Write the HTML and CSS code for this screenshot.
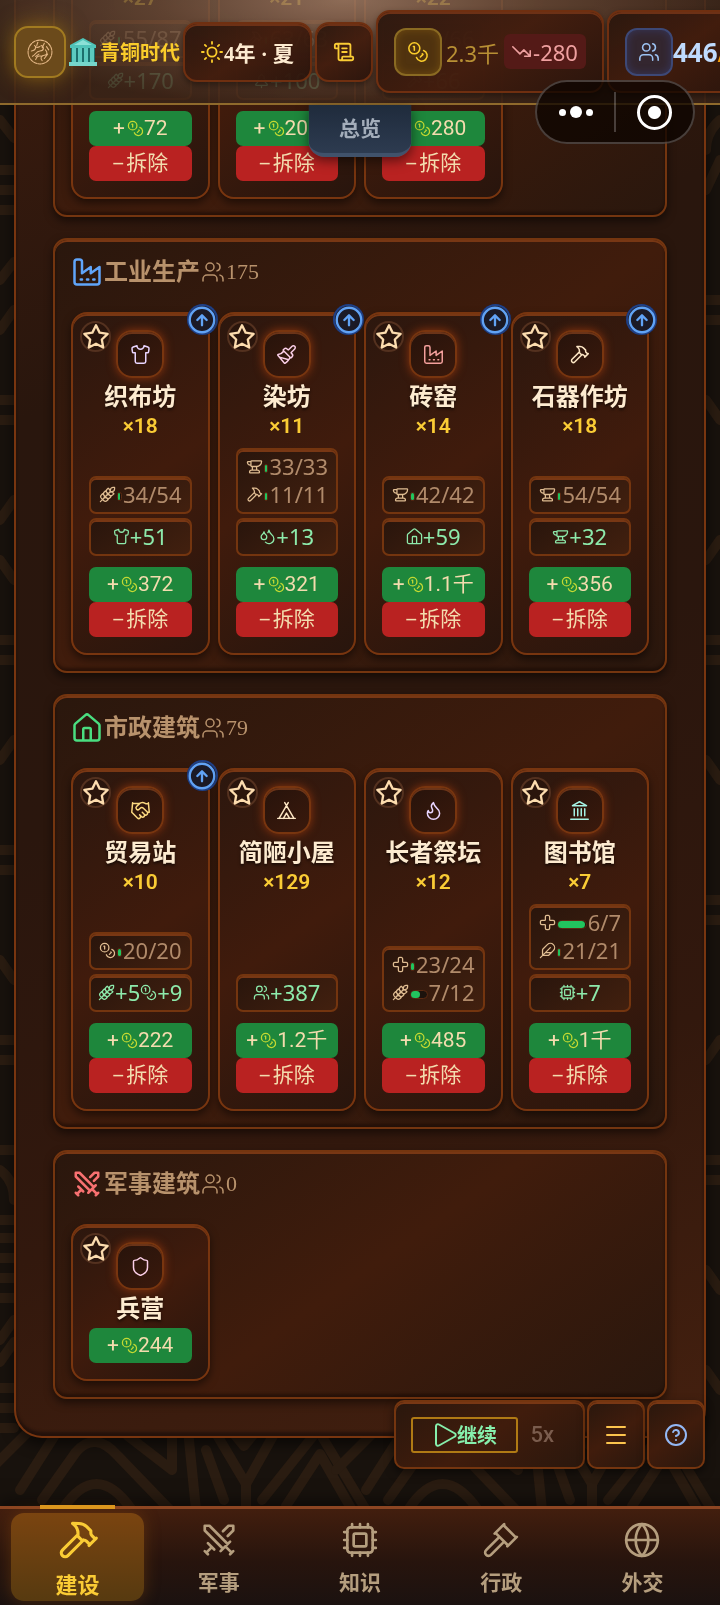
FILE: index.html
```
<!DOCTYPE html>
<html lang="zh-CN">
<head>
    <meta charset="UTF-8">
    <meta name="viewport" content="width=device-width, initial-scale=1.0">
    <title>建设</title>
    <link rel="stylesheet" href="styles.css">
</head>
<body>
    <!-- icon sprite -->
    <svg class="sprite" aria-hidden="true">
        <symbol id="star" viewBox="0 0 24 24"><path d="M12 2l3.09 6.26L22 9.27l-5 4.87 1.18 6.88L12 17.77l-6.18 3.25L7 14.14 2 9.27l6.91-1.01z"/></symbol>
        <symbol id="up" viewBox="0 0 24 24"><circle cx="12" cy="12" r="10.500"/><path d="M12 16.500V8M8 12l4-4 4 4"/></symbol>
        <symbol id="factory" viewBox="0 0 24 24"><path d="M2 20a2 2 0 0 0 2 2h16a2 2 0 0 0 2-2V8l-7 5V8l-7 5V4a2 2 0 0 0-2-2H4a2 2 0 0 0-2 2ZM17 18h1M12 18h1M7 18h1"/></symbol>
        <symbol id="users" viewBox="0 0 24 24"><circle cx="9" cy="7" r="4"/><path d="M16 21v-2a4 4 0 0 0-4-4H6a4 4 0 0 0-4 4v2M22 21v-2a4 4 0 0 0-3-3.870M16 3.130a4 4 0 0 1 0 7.750"/></symbol>
        <symbol id="coins" viewBox="0 0 24 24"><circle cx="8" cy="8" r="6"/><path d="M18.090 10.370A6 6 0 1 1 10.340 18M7 6h1v4M16.710 13.880l.7.710-2.820 2.820"/></symbol>
        <symbol id="shirt" viewBox="0 0 24 24"><path d="M20.380 3.460 16 2a4 4 0 0 1-8 0L3.620 3.460a2 2 0 0 0-1.340 2.230l.58 3.470a1 1 0 0 0 .99.84H6v10c0 1.100.9 2 2 2h8a2 2 0 0 0 2-2V10h2.150a1 1 0 0 0 .99-.84l.58-3.470a2 2 0 0 0-1.340-2.230z"/></symbol>
        <symbol id="brush" viewBox="0 0 24 24"><path d="m14.622 17.897-10.680-2.913M18.376 2.622a1 1 0 1 1 3.002 3.002L17.360 9.643a.5.5 0 0 0 0 .707l.944.944a2.410 2.410 0 0 1 0 3.408l-.944.944a.5.5 0 0 1-.707 0L8.354 7.348a.5.5 0 0 1 0-.707l.944-.944a2.410 2.410 0 0 1 3.408 0l.944.944a.5.5 0 0 0 .707 0zM9 8c-1.804 2.710-3.970 3.460-6.583 3.948a.507.507 0 0 0-.302.819l7.320 8.883a1 1 0 0 0 1.185.204C12.735 20.405 16 16.792 16 15"/></symbol>
        <symbol id="hammer" viewBox="0 0 24 24"><path d="m15 12-8.500 8.500a2.120 2.120 0 0 1-3-3L12 9M18 15l4-4M21.500 11.500l-1.914-1.914A2 2 0 0 1 19 8.172V7l-2.260-2.260a6 6 0 0 0-4.202-1.756L9 2.960l.92.82A6.180 6.180 0 0 1 12 8.400V10l2 2h1.172a2 2 0 0 1 1.414.586L18.500 14.500"/></symbol>
        <symbol id="anvil" viewBox="0 0 24 24"><path d="M7 10H6a4 4 0 0 1-4-4 1 1 0 0 1 1-1h4M7 5a1 1 0 0 1 1-1h13a1 1 0 0 1 1 1 7 7 0 0 1-7 7H8a1 1 0 0 1-1-1zM9 12v5M15 12v5M5 20a3 3 0 0 1 3-3h8a3 3 0 0 1 3 3 1 1 0 0 1-1 1H6a1 1 0 0 1-1-1"/></symbol>
        <symbol id="wheat" viewBox="0 0 24 24"><path d="M2 22 16 8M3.470 12.530 5 11l1.530 1.530a3.500 3.500 0 0 1 0 4.940L5 19l-1.530-1.530a3.500 3.500 0 0 1 0-4.940ZM7.470 8.530 9 7l1.530 1.530a3.500 3.500 0 0 1 0 4.940L9 15l-1.530-1.530a3.500 3.500 0 0 1 0-4.940ZM11.470 4.530 13 3l1.530 1.530a3.500 3.500 0 0 1 0 4.940L13 11l-1.530-1.530a3.500 3.500 0 0 1 0-4.940ZM20 2h2v2a4 4 0 0 1-4 4h-2V6a4 4 0 0 1 4-4ZM11.470 17.470 13 19l-1.530 1.530a3.500 3.500 0 0 1-4.940 0L5 19l1.530-1.530a3.500 3.500 0 0 1 4.940 0ZM15.470 13.470 17 15l-1.530 1.530a3.500 3.500 0 0 1-4.940 0L9 15l1.530-1.530a3.500 3.500 0 0 1 4.940 0ZM19.470 9.470 21 11l-1.530 1.530a3.500 3.500 0 0 1-4.940 0L13 11l1.530-1.530a3.500 3.500 0 0 1 4.940 0Z"/></symbol>
        <symbol id="drops" viewBox="0 0 24 24"><path d="M7 16.300c2.200 0 4-1.830 4-4.050 0-1.160-.57-2.260-1.710-3.190S7.290 6.750 7 5.300c-.29 1.450-1.140 2.840-2.290 3.760S3 11.100 3 12.250c0 2.220 1.800 4.050 4 4.050zM12.560 6.600A10.970 10.970 0 0 0 14 3.020c.5 2.500 2 4.900 4 6.500s3 3.500 3 5.500a6.980 6.980 0 0 1-11.910 4.970"/></symbol>
        <symbol id="house" viewBox="0 0 24 24"><path d="M15 21v-8a1 1 0 0 0-1-1h-4a1 1 0 0 0-1 1v8M2 10a2 2 0 0 1 .709-1.528l8-6.800a2 2 0 0 1 2.582 0l8 6.800A2 2 0 0 1 22 10v10a2 2 0 0 1-2 2H4a2 2 0 0 1-2-2z"/></symbol>
        <symbol id="shake" viewBox="0 0 24 24"><path d="m11 17 2 2a1 1 0 1 0 3-3M14 14l2.500 2.500a1 1 0 1 0 3-3l-3.880-3.880a3 3 0 0 0-4.240 0l-.88.88a1 1 0 1 1-3-3l2.810-2.810a5.790 5.790 0 0 1 7.060-.87l.47.28a2 2 0 0 0 1.420.25L21 4M21 3l1 11h-2M3 3 2 14l6.500 6.500a1 1 0 1 0 3-3M3 4h8"/></symbol>
        <symbol id="tent" viewBox="0 0 24 24"><path d="M3.500 21 14 3M20.500 21 10 3M15.500 21 12 15l-3.500 6M2 21h20"/></symbol>
        <symbol id="flame" viewBox="0 0 24 24"><path d="M8.500 14.500A2.500 2.500 0 0 0 11 12c0-1.380-.5-2-1-3-1.072-2.143-.224-4.054 2-6 .5 2.500 2 4.900 4 6.500 2 1.600 3 3.500 3 5.500a7 7 0 1 1-14 0c0-1.153.433-2.294 1-3a2.500 2.500 0 0 0 2.500 2.500z"/></symbol>
        <symbol id="landmark" viewBox="0 0 24 24"><path d="M10 18v-8M14 18v-8M18 18v-8M6 18v-8M2 22h20M12 2l8 4.500H4z"/></symbol>
        <symbol id="cross" viewBox="0 0 24 24"><path d="M4 9a2 2 0 0 0-2 2v2a2 2 0 0 0 2 2h4a1 1 0 0 1 1 1v4a2 2 0 0 0 2 2h2a2 2 0 0 0 2-2v-4a1 1 0 0 1 1-1h4a2 2 0 0 0 2-2v-2a2 2 0 0 0-2-2h-4a1 1 0 0 1-1-1V4a2 2 0 0 0-2-2h-2a2 2 0 0 0-2 2v4a1 1 0 0 1-1 1z"/></symbol>
        <symbol id="feather" viewBox="0 0 24 24"><path d="M12.670 19a2 2 0 0 0 1.416-.588l6.154-6.172a6 6 0 0 0-8.490-8.490L5.586 9.914A2 2 0 0 0 5 11.328V18a1 1 0 0 0 1 1zM16 8 2 22M17.500 15H9"/></symbol>
        <symbol id="cpu" viewBox="0 0 24 24"><rect x="4" y="4" width="16" height="16" rx="2"/><rect x="8" y="8" width="8" height="8" rx="1"/><path d="M12 20v2M12 2v2M17 20v2M17 2v2M2 12h2M2 17h2M2 7h2M20 12h2M20 17h2M20 7h2M7 20v2M7 2v2"/></symbol>
        <symbol id="swords" viewBox="0 0 24 24"><path d="M14.500 17.500 3 6V3h3l11.500 11.500M13 19l6-6M16 16l4 4M19 21l2-2M14.500 6.500 18 3h3v3l-3.500 3.500M5 14l4 4M7 17l-3 3M3 19l2 2"/></symbol>
        <symbol id="shield" viewBox="0 0 24 24"><path d="M20 13c0 5-3.500 7.500-7.660 8.950a1 1 0 0 1-.67-.01C7.500 20.500 4 18 4 13V6a1 1 0 0 1 1-1c2 0 4.500-1.200 6.240-2.720a1.170 1.170 0 0 1 1.520 0C14.510 3.810 17 5 19 5a1 1 0 0 1 1 1z"/></symbol>
        <symbol id="gavel" viewBox="0 0 24 24"><path d="m14 13-8.381 8.380a1 1 0 0 1-3.001-3L11 10M16 16l6-6M21.500 10.500l-8-8M8 8l6-6M8.500 7.500l8 8"/></symbol>
        <symbol id="globe" viewBox="0 0 24 24"><circle cx="12" cy="12" r="10"/><path d="M12 2a14.500 14.500 0 0 0 0 20 14.500 14.500 0 0 0 0-20M2 12h20"/></symbol>
        <symbol id="sun" viewBox="0 0 24 24"><circle cx="12" cy="12" r="5"/><path d="M12 1v2M12 21v2M4.200 4.200l1.400 1.400M18.400 18.400l1.400 1.400M1 12h2M21 12h2M5.600 18.400l-1.400 1.400M19.800 4.200l-1.400 1.400"/></symbol>
        <symbol id="scroll" viewBox="0 0 24 24"><path d="M15 12h-5M15 8h-5M19 17V5a2 2 0 0 0-2-2H4M8 21h12a2 2 0 0 0 2-2v-1a1 1 0 0 0-1-1H11a1 1 0 0 0-1 1v1a2 2 0 1 1-4 0V5a2 2 0 1 0-4 0v2a1 1 0 0 0 1 1h3"/></symbol>
        <symbol id="down" viewBox="0 0 24 24"><path d="M16 18h7v-7M23 18l-8-8-5 5L1 6"/></symbol>
        <symbol id="play" viewBox="0 0 24 24"><path d="M3 3a2 2 0 0 1 3-1.500l16 9a2 2 0 0 1 0 3l-16 9A2 2 0 0 1 3 21z"/></symbol>
        <symbol id="menu" viewBox="0 0 24 24"><path d="M3 4h18M3 12h18M3 20h18"/></symbol>
        <symbol id="help" viewBox="0 0 24 24"><circle cx="12" cy="12" r="10"/><path d="M9.090 9a3 3 0 0 1 5.830 1c0 2-3 3-3 3M12 17h.01"/></symbol>
        <symbol id="tree" viewBox="0 0 24 24"><path d="m17 14 3 3.300a1 1 0 0 1-.7 1.700H4.700a1 1 0 0 1-.7-1.700L7 14h-.3a1 1 0 0 1-.7-1.700L9 9h-.2A1 1 0 0 1 8 7.300L12 3l4 4.300a1 1 0 0 1-.8 1.700H15l3 3.300a1 1 0 0 1-.7 1.700ZM12 22v-3"/></symbol>
    </svg>

    <!-- backdrop ornament -->
    <svg class="backdrop" viewBox="0 0 720 1605" preserveAspectRatio="xMidYMax slice" aria-hidden="true">
        <g id="weave">
            <path d="M20 1490L62 1424Q95 1390 128 1436L172 1470V1436M42 1500L76 1452Q95 1430 118 1456L170 1510M62 1510Q96 1458 132 1510M-10 1470L36 1424M188 1430L196 1510M206 1450L224 1500M214 1430L246 1484L282 1420M246 1484V1510M226 1424L244 1446L262 1424M262 1500L318 1430L366 1510M286 1506L320 1454L352 1510"/>
        </g>
        <use href="#weave" x="346"/>
        <path d="M0 1150h14M0 1170Q14 1180 14 1200M0 1220h14M0 1238h14M0 1258h14M0 1278h14M0 1298h14M0 1340L14 1320M0 1362L14 1342M0 1388h14M0 1408h14M0 1428h14M0 120L14 138M0 170h14M0 190h14M0 210h14M0 280L14 262M0 330L14 310M0 400h14M0 420h14M0 520L14 500M0 560L14 580M0 640h14M0 660h14M0 760L14 740M0 850h14M0 870h14M0 960L14 980M0 1040h14M0 1060h14"/>
        <path d="M720 120Q706 132 706 150M720 160L706 190M720 300h-14M720 320h-14M720 420l-14-20M720 540l-14 20M720 640h-14M720 660h-14M720 780l-14-20M720 900h-14M720 920h-14M720 1040l-14 20M720 1160h-14M720 1180h-14M720 1290l-14-20M720 1390l-14-20"/>
    </svg>

    <main class="board">
        <section class="panel">
            <div class="cards">
                <article class="card cut">
                    <p class="count">×27</p>
                    <div class="io">
                        <div class="box needs"><div class="need"><svg class="i"><use href="#wheat"/></svg><span class="bar"><b style="width:63%"></b></span>55/87</div></div>
                        <div class="box gains"><svg class="i"><use href="#wheat"/></svg>+170</div>
                    </div>
                    <button class="buy">+<svg class="i"><use href="#coins"/></svg>72</button>
                    <button class="raze"><span class="sign">−</span>拆除</button>
                </article>
                <article class="card cut">
                    <p class="count">×21</p>
                    <div class="io">
                        <div class="box needs"><div class="need"><svg class="i"><use href="#hammer"/></svg><span class="bar"><b style="width:100%"></b></span>63/63</div></div>
                        <div class="box gains"><svg class="i"><use href="#tree"/></svg>+100</div>
                    </div>
                    <button class="buy">+<svg class="i"><use href="#coins"/></svg>209</button>
                    <button class="raze"><span class="sign">−</span>拆除</button>
                </article>
                <article class="card cut">
                    <p class="count">×22</p>
                    <div class="io">
                        <div class="box needs"><div class="need"><svg class="i"><use href="#hammer"/></svg><span class="bar"><b style="width:100%"></b></span>66/66</div></div>
                        <div class="box gains"><svg class="i"><use href="#hammer"/></svg>+66</div>
                    </div>
                    <button class="buy">+<svg class="i"><use href="#coins"/></svg>280</button>
                    <button class="raze"><span class="sign">−</span>拆除</button>
                </article>
            </div>
        </section>

        <section class="panel">
            <h2 class="heading"><svg class="kind blue"><use href="#factory"/></svg>工业生产<svg class="people"><use href="#users"/></svg><span>175</span></h2>
            <div class="cards">
                <article class="card">
                    <button class="star" aria-label="收藏"><svg><use href="#star"/></svg></button>
                    <button class="upgrade" aria-label="升级"><svg><use href="#up"/></svg></button>
                    <div class="tile lilac"><svg><use href="#shirt"/></svg></div>
                    <h3>织布坊</h3>
                    <p class="count">×18</p>
                    <div class="io">
                        <div class="box needs"><div class="need"><svg class="i"><use href="#wheat"/></svg><span class="bar"><b style="width:63%"></b></span>34/54</div></div>
                        <div class="box gains"><svg class="i"><use href="#shirt"/></svg>+51</div>
                    </div>
                    <button class="buy">+<svg class="i"><use href="#coins"/></svg>372</button>
                    <button class="raze"><span class="sign">−</span>拆除</button>
                </article>
                <article class="card">
                    <button class="star" aria-label="收藏"><svg><use href="#star"/></svg></button>
                    <button class="upgrade" aria-label="升级"><svg><use href="#up"/></svg></button>
                    <div class="tile pink"><svg><use href="#brush"/></svg></div>
                    <h3>染坊</h3>
                    <p class="count">×11</p>
                    <div class="io">
                        <div class="box needs">
                            <div class="need"><svg class="i"><use href="#anvil"/></svg><span class="bar"><b style="width:100%"></b></span>33/33</div>
                            <div class="need"><svg class="i"><use href="#hammer"/></svg><span class="bar"><b style="width:100%"></b></span>11/11</div>
                        </div>
                        <div class="box gains"><svg class="i"><use href="#drops"/></svg>+13</div>
                    </div>
                    <button class="buy">+<svg class="i"><use href="#coins"/></svg>321</button>
                    <button class="raze"><span class="sign">−</span>拆除</button>
                </article>
                <article class="card">
                    <button class="star" aria-label="收藏"><svg><use href="#star"/></svg></button>
                    <button class="upgrade" aria-label="升级"><svg><use href="#up"/></svg></button>
                    <div class="tile red"><svg><use href="#factory"/></svg></div>
                    <h3>砖窑</h3>
                    <p class="count">×14</p>
                    <div class="io">
                        <div class="box needs"><div class="need"><svg class="i"><use href="#anvil"/></svg><span class="bar"><b style="width:100%"></b></span>42/42</div></div>
                        <div class="box gains"><svg class="i"><use href="#house"/></svg>+59</div>
                    </div>
                    <button class="buy">+<svg class="i"><use href="#coins"/></svg>1.1千</button>
                    <button class="raze"><span class="sign">−</span>拆除</button>
                </article>
                <article class="card">
                    <button class="star" aria-label="收藏"><svg><use href="#star"/></svg></button>
                    <button class="upgrade" aria-label="升级"><svg><use href="#up"/></svg></button>
                    <div class="tile cream"><svg><use href="#hammer"/></svg></div>
                    <h3>石器作坊</h3>
                    <p class="count">×18</p>
                    <div class="io">
                        <div class="box needs"><div class="need"><svg class="i"><use href="#anvil"/></svg><span class="bar"><b style="width:100%"></b></span>54/54</div></div>
                        <div class="box gains"><svg class="i"><use href="#anvil"/></svg>+32</div>
                    </div>
                    <button class="buy">+<svg class="i"><use href="#coins"/></svg>356</button>
                    <button class="raze"><span class="sign">−</span>拆除</button>
                </article>
            </div>
        </section>

        <section class="panel">
            <h2 class="heading"><svg class="kind green"><use href="#house"/></svg>市政建筑<svg class="people"><use href="#users"/></svg><span>79</span></h2>
            <div class="cards">
                <article class="card">
                    <button class="star" aria-label="收藏"><svg><use href="#star"/></svg></button>
                    <button class="upgrade" aria-label="升级"><svg><use href="#up"/></svg></button>
                    <div class="tile gold"><svg><use href="#shake"/></svg></div>
                    <h3>贸易站</h3>
                    <p class="count">×10</p>
                    <div class="io">
                        <div class="box needs"><div class="need"><svg class="i"><use href="#coins"/></svg><span class="bar"><b style="width:100%"></b></span>20/20</div></div>
                        <div class="box gains"><svg class="i"><use href="#wheat"/></svg>+5<svg class="i"><use href="#coins"/></svg>+9</div>
                    </div>
                    <button class="buy">+<svg class="i"><use href="#coins"/></svg>222</button>
                    <button class="raze"><span class="sign">−</span>拆除</button>
                </article>
                <article class="card">
                    <button class="star" aria-label="收藏"><svg><use href="#star"/></svg></button>
                    <div class="tile cream"><svg><use href="#tent"/></svg></div>
                    <h3>简陋小屋</h3>
                    <p class="count">×129</p>
                    <div class="io">
                        <div class="box gains"><svg class="i"><use href="#users"/></svg>+387</div>
                    </div>
                    <button class="buy">+<svg class="i"><use href="#coins"/></svg>1.2千</button>
                    <button class="raze"><span class="sign">−</span>拆除</button>
                </article>
                <article class="card">
                    <button class="star" aria-label="收藏"><svg><use href="#star"/></svg></button>
                    <div class="tile lilac"><svg><use href="#flame"/></svg></div>
                    <h3>长者祭坛</h3>
                    <p class="count">×12</p>
                    <div class="io">
                        <div class="box needs">
                            <div class="need"><svg class="i"><use href="#cross"/></svg><span class="bar"><b style="width:96%"></b></span>23/24</div>
                            <div class="need"><svg class="i"><use href="#wheat"/></svg><span class="bar"><b style="width:58%"></b></span>7/12</div>
                        </div>
                    </div>
                    <button class="buy">+<svg class="i"><use href="#coins"/></svg>485</button>
                    <button class="raze"><span class="sign">−</span>拆除</button>
                </article>
                <article class="card">
                    <button class="star" aria-label="收藏"><svg><use href="#star"/></svg></button>
                    <div class="tile cyan"><svg><use href="#landmark"/></svg></div>
                    <h3>图书馆</h3>
                    <p class="count">×7</p>
                    <div class="io">
                        <div class="box needs">
                            <div class="need"><svg class="i"><use href="#cross"/></svg><span class="bar"><b style="width:96%"></b></span>6/7</div>
                            <div class="need"><svg class="i"><use href="#feather"/></svg><span class="bar"><b style="width:100%"></b></span>21/21</div>
                        </div>
                        <div class="box gains"><svg class="i"><use href="#cpu"/></svg>+7</div>
                    </div>
                    <button class="buy">+<svg class="i"><use href="#coins"/></svg>1千</button>
                    <button class="raze"><span class="sign">−</span>拆除</button>
                </article>
            </div>
        </section>

        <section class="panel">
            <h2 class="heading"><svg class="kind rose"><use href="#swords"/></svg>军事建筑<svg class="people"><use href="#users"/></svg><span>0</span></h2>
            <div class="cards">
                <article class="card">
                    <button class="star" aria-label="收藏"><svg><use href="#star"/></svg></button>
                    <div class="tile pink"><svg><use href="#shield"/></svg></div>
                    <h3>兵营</h3>
                    <button class="buy">+<svg class="i"><use href="#coins"/></svg>244</button>
                </article>
            </div>
        </section>
    </main>

    <header class="topbar">
        <div class="logo">
            <svg viewBox="0 0 24 24"><circle cx="12" cy="12" r="11" stroke-dasharray="3 1"/><path d="M5 16c3-1 3-5 7-5s4-4 1-5M7 6c1 2 3 2 5 1M4 11c3 0 4-2 4-4M14 20c-2-2-1-5 2-5s3-3 1-5M8 19c1-3 3-4 6-3M18 7l2 3M16 4l-2 4M11 14l-3 2M19 14l-3 4M10 3l-1 3"/></svg>
        </div>
        <svg class="temple" viewBox="0 0 28 28">
            <path d="M14 0L27 7v3H1V7z" fill="#4fc3b8"/><path d="M14 2l9 5H5z" fill="#8be0d6"/>
            <path d="M2 10h24v14H2z" fill="#1c6f6c"/><path d="M3 10h4v14H3zM9 10h4v14H9zM15 10h4v14h-4zM21 10h4v14h-4z" fill="#5ccabf"/>
            <path d="M0 24h28v4H0z" fill="#76d6cb"/>
        </svg>
        <strong class="era">青铜时代</strong>
        <div class="chip season"><svg><use href="#sun"/></svg>4年 · 夏</div>
        <button class="chip" aria-label="日志"><svg><use href="#scroll"/></svg></button>
        <div class="chip tall">
            <span class="tile goldtile"><svg><use href="#coins"/></svg></span>
            <span class="silver">2.3千</span>
            <span class="loss"><svg><use href="#down"/></svg>-280</span>
        </div>
        <div class="chip tall">
            <span class="tile bluetile"><svg><use href="#users"/></svg></span>
            <strong class="pop">446<i>/</i></strong>
        </div>
    </header>
    <button class="overview">总览</button>

    <div class="capsule">
        <button class="dots" aria-label="更多"><i></i><i></i><i></i></button>
        <button class="target" aria-label="关闭"><i></i></button>
    </div>

    <div class="controls">
        <div class="ctl speed">
            <button class="resume"><svg><use href="#play"/></svg>继续</button>
            <button class="rate">5x</button>
        </div>
        <button class="ctl amber" aria-label="菜单"><svg><use href="#menu"/></svg></button>
        <button class="ctl sky" aria-label="帮助"><svg><use href="#help"/></svg></button>
    </div>

    <nav class="tabs">
        <a class="tab active" href="#"><svg><use href="#hammer"/></svg>建设</a>
        <a class="tab" href="#"><svg><use href="#swords"/></svg>军事</a>
        <a class="tab" href="#"><svg><use href="#cpu"/></svg>知识</a>
        <a class="tab" href="#"><svg><use href="#gavel"/></svg>行政</a>
        <a class="tab" href="#"><svg><use href="#globe"/></svg>外交</a>
    </nav>
</body>
</html>
```
FILE: styles.css
```
* {
    box-sizing: border-box;
}

body {
    margin: 0;
    height: 100vh;
    overflow: hidden;
    background-color: #18120d;
    color: #fdebc8;
    font-family: Roboto, "Noto Sans CJK SC", sans-serif;
    font-size: 21px;
}

h2, h3, p {
    margin: 0;
}

button {
    margin: 0;
    padding: 0;
    border: none;
    background: none;
    color: inherit;
    font: inherit;
    cursor: pointer;
}

svg {
    flex: none;
    fill: none;
    stroke: currentColor;
    stroke-width: 2;
    stroke-linecap: round;
    stroke-linejoin: round;
}

.sprite {
    position: absolute;
    width: 0;
    height: 0;
}

.backdrop {
    position: fixed;
    inset: 0;
    width: 100%;
    height: 100%;
    stroke: #2a1c11;
    stroke-width: 10;
}

.board {
    position: relative;
    display: flex;
    flex-direction: column;
    justify-content: flex-end;
    gap: 21px;
    height: calc(100vh - 167px);
    margin: 0 14px;
    padding: 0 37px 37px;
    overflow: hidden;
    border: 2px solid #78350f;
    border-top: none;
    border-radius: 0 0 28px 28px;
    background: linear-gradient(160deg, #3a1b0e, #29160d 25%, #2a160d 50%, #32180d 75%, #44200f);
    box-shadow: inset 0 -4px 3px rgba(20, 10, 8, 0.6), 0 6px 14px rgba(0, 0, 0, 0.6);
}

.panel {
    flex: none;
    padding: 16px;
    border: 2px solid #74350f;
    border-radius: 14px;
    background: linear-gradient(145deg, #2a170d, #401c0c 50%, #2a170d);
    box-shadow: inset 0 2px 0 #783714, inset 0 -3px 3px rgba(20, 8, 4, 0.5), 0 4px 8px rgba(0, 0, 0, 0.5);
}

.heading {
    display: flex;
    align-items: center;
    height: 32px;
    margin-bottom: 24px;
    color: #b8926c;
    font-size: 24px;
    font-weight: 700;
    line-height: 32px;
}

.heading span {
    font-family: "Liberation Serif", serif;
    font-size: 22px;
    font-weight: 400;
}

.kind {
    width: 30px;
    height: 30px;
    margin: 0 2px 0 1px;
}

.people {
    width: 24px;
    height: 24px;
    margin: 0 1px;
    stroke-width: 1.5;
}

.blue { color: #60a5fa; }
.green { color: #4ade80; }
.rose { color: #f87171; }

.cards {
    display: grid;
    grid-template-columns: repeat(4, 1fr);
    gap: 8px;
}

.card {
    position: relative;
    display: flex;
    flex-direction: column;
    padding: 16px;
    border: 2px solid #78350f;
    border-radius: 16px;
    background: linear-gradient(145deg, #2c170e, #401b0c 50%, #28150d);
    box-shadow: inset 0 2px 0 #783714, 0 4px 8px rgba(0, 0, 0, 0.5);
}

.card h3 {
    color: #fdebd0;
    font-size: 24px;
    line-height: 38px;
    text-align: center;
    white-space: nowrap;
    text-shadow: 0 2px 3px rgba(0, 0, 0, 0.6);
}

.count {
    color: #facc35;
    font-weight: 600;
    line-height: 20px;
    text-align: center;
}

.star,
.upgrade {
    position: absolute;
    display: flex;
    align-items: center;
    justify-content: center;
    width: 31px;
    height: 31px;
    border-radius: 50%;
}

.star {
    top: 7px;
    left: 7px;
    border: 2px solid #54311f;
    background-color: #2a150c;
    color: #fcdcae;
}

.upgrade {
    top: -10px;
    right: -10px;
    background-color: #1b1a26;
    box-shadow: inset 0 0 0 2px #203f84;
    color: #61a3f5;
}

.star svg {
    width: 28px;
    height: 28px;
}

.upgrade svg {
    width: 28px;
    height: 28px;
}

.tile {
    display: flex;
    align-items: center;
    justify-content: center;
    align-self: center;
    width: 48px;
    height: 48px;
    border: 2px solid #78350f;
    border-radius: 16px;
    background: linear-gradient(145deg, #27130b, #3a190c);
    box-shadow: inset 0 2px 0 #6b3418, 0 0 10px #8a340e;
}

.tile svg {
    width: 21px;
    height: 21px;
    stroke-width: 1.7;
}

.lilac { color: #e9d5ff; }
.pink { color: #fbcfe8; }
.red { color: #f4a09c; }
.cream { color: #fde6c4; }
.gold { color: #fcd980; }
.cyan { color: #a5f3e4; }

.io {
    display: flex;
    flex-direction: column;
    gap: 4px;
    margin-top: auto;
    padding: 12px 0 11px;
}

.box {
    padding: 2px 8px 4px;
    border: 2px solid #74350f;
    border-radius: 7px;
    background: linear-gradient(145deg, #29150c, #42200f);
    box-shadow: inset 0 2px 0 #783714;
    color: #b08a6a;
    font-family: "Noto Sans", sans-serif;
    font-size: 22px;
    line-height: 28px;
}

.need,
.gains {
    display: flex;
    align-items: center;
}

.gains {
    justify-content: center;
    padding: 2px 0 4px;
    color: #8deaab;
}

.i {
    width: 17px;
    height: 17px;
    stroke-width: 1.8;
}

.needs .i {
    color: #e0bd92;
}

.bar {
    flex: 1;
    height: 9px;
    margin: 4px 1px 0;
    border: 1px solid #5c2a12;
    border-radius: 5px;
    background-color: #1c120c;
}

.bar b {
    display: block;
    height: 100%;
    border-radius: 4px;
    background-color: #22c55e;
}

.buy,
.raze {
    display: flex;
    align-items: center;
    justify-content: center;
    height: 35px;
    border-radius: 7px;
    color: #f3dcae;
    line-height: 35px;
    white-space: nowrap;
}

.buy {
    background-color: #1e873c;
}

.buy .i {
    margin-left: 2px;
    color: #c3d932;
}

.raze {
    gap: 2px;
    background-color: #b92221;
}

.sign {
    font-family: "Noto Sans", sans-serif;
}

.cut .count {
    margin-top: 40px;
}

/* top bar */
.topbar {
    position: fixed;
    top: 0;
    left: 0;
    right: 0;
    display: flex;
    align-items: center;
    gap: 3px;
    height: 105px;
    padding-left: 14px;
    overflow: hidden;
    border-bottom: 2px solid #8f6a2c;
    background: radial-gradient(ellipse at 48% 0, rgba(156, 122, 100, 0.85), rgba(105, 78, 60, 0.78) 35%, rgba(58, 36, 24, 0.88) 75%);
}

.topbar > * {
    flex: none;
}

.logo {
    display: flex;
    align-items: center;
    justify-content: center;
    width: 52px;
    height: 52px;
    border: 2px solid #a17a20;
    border-radius: 14px;
    background-color: #6b4a1b;
    box-shadow: 0 0 22px rgba(190, 140, 20, 0.6);
    color: #e3b685;
}

.logo svg {
    width: 26px;
    height: 26px;
    stroke-width: 1;
}

.temple {
    width: 28px;
    height: 28px;
    stroke: none;
}

.era {
    color: #facc2b;
    font-size: 20px;
}

.chip {
    display: flex;
    align-items: center;
    height: 60px;
    padding: 0 16px;
    border: 2px solid #6f2f10;
    border-radius: 14px;
    background: linear-gradient(145deg, rgba(42, 22, 13, 0.94), rgba(66, 28, 13, 0.94) 50%, rgba(42, 20, 12, 0.94));
    box-shadow: inset 0 2px 0 #6d3116, 0 3px 6px rgba(0, 0, 0, 0.4);
    color: #facc35;
}

.chip svg {
    width: 22px;
    height: 22px;
}

.season {
    color: #fdebd0;
    font-family: "Liberation Serif", "Noto Sans CJK SC", serif;
    font-weight: 700;
}

.season svg {
    margin-right: 1px;
    color: #facc2b;
}

.chip.tall {
    height: 83px;
}

.chip.tall .tile {
    border-radius: 12px;
}

.tall .goldtile {
    border-color: #8a6a22;
    background: #50330f;
    box-shadow: inset 0 0 8px rgba(160, 110, 20, 0.4);
    color: #facc2b;
}

.tall .bluetile {
    border-color: #3d4876;
    background: #33262f;
    box-shadow: inset 0 0 8px rgba(60, 80, 160, 0.4);
    color: #9cc2f2;
}

.silver {
    margin: 0 5px 0 4px;
    color: #b89034;
    font-family: "Noto Sans", "Noto Sans CJK SC", sans-serif;
    font-size: 22px;
}

.loss {
    display: flex;
    gap: 2px;
    align-items: center;
    height: 35px;
    padding: 0 8px;
    border-radius: 6px;
    background-color: #541a17;
    color: #efa0a0;
    font-family: "Noto Sans", sans-serif;
    font-size: 22px;
}

.loss svg {
    width: 19px;
    height: 19px;
}

.pop {
    color: #bfdbfe;
    font-family: "Noto Sans", sans-serif;
    font-size: 26px;
}

.pop i {
    color: #f59e0b;
    font-style: normal;
}

.overview {
    position: fixed;
    top: 105px;
    left: 50%;
    width: 103px;
    height: 52px;
    padding-bottom: 4px;
    transform: translateX(-50%);
    border-bottom: 4px solid #40526b;
    border-radius: 0 0 16px 16px;
    background: linear-gradient(#1f2b3c, #2d3b50);
    box-shadow: 0 4px 12px rgba(0, 0, 0, 0.5);
    color: #a3adba;
    font-weight: 700;
}

.capsule {
    position: fixed;
    top: 80px;
    right: 25px;
    display: flex;
    align-items: center;
    width: 160px;
    height: 64px;
    border: 2px solid rgba(255, 255, 255, 0.22);
    border-radius: 32px;
    background-color: rgba(12, 4, 0, 0.76);
}

.dots,
.target {
    display: flex;
    flex: 1;
    align-items: center;
    justify-content: center;
    gap: 4px;
    height: 40px;
}

.dots {
    border-right: 2px solid rgba(255, 255, 255, 0.22);
}

.dots i {
    width: 7px;
    height: 7px;
    border-radius: 50%;
    background-color: #fff;
}

.dots i:nth-child(2) {
    width: 12px;
    height: 12px;
}

.target i {
    width: 35px;
    height: 35px;
    border: 3px solid #fff;
    border-radius: 50%;
    background: radial-gradient(#fff 6px, transparent 7px);
}

/* game speed */
.controls {
    position: fixed;
    right: 15px;
    bottom: 136px;
    display: flex;
    gap: 2px;
}

.ctl {
    display: flex;
    align-items: center;
    justify-content: center;
    min-width: 58px;
    height: 69px;
    border: 2px solid #74350f;
    border-radius: 10px;
    background: linear-gradient(145deg, #2a170d, #401c0c 50%, #2a170d);
    box-shadow: inset 0 2px 0 #783714, 0 4px 10px rgba(0, 0, 0, 0.5);
}

.ctl svg {
    width: 24px;
    height: 24px;
}

.speed {
    gap: 12px;
    padding: 0 29px 0 15px;
}

.resume {
    display: flex;
    align-items: center;
    justify-content: center;
    width: 107px;
    height: 36px;
    border: 2px solid #b07a14;
    border-radius: 3px;
    color: #86efac;
    font-size: 20px;
    font-weight: 700;
}

.rate {
    color: #7a5c4d;
    font-size: 22px;
    font-weight: 500;
}

.amber { color: #fcc44d; }
.sky { color: #93b8f5; }

/* bottom tabs */
.tabs {
    position: fixed;
    left: 0;
    right: 0;
    bottom: 0;
    display: flex;
    height: 99px;
    padding: 4px 7px;
    border-top: 3px solid #8c4522;
    background: linear-gradient(#421e0e, #27140d 55%, #1b1210);
    box-shadow: 0 -4px 16px rgba(0, 0, 0, 0.5);
}

.tab {
    position: relative;
    display: flex;
    flex: 1;
    flex-direction: column;
    align-items: center;
    justify-content: center;
    gap: 10px;
    margin: 0 4px;
    padding-top: 4px;
    border-radius: 13px;
    color: #b59e7e;
    font-weight: 600;
    line-height: 28px;
    text-decoration: none;
}

.tab svg {
    width: 38px;
    height: 38px;
    stroke-width: 1.7;
}

.tab.active {
    background: linear-gradient(#7a4410, #573a10);
    box-shadow: 0 0 16px rgba(150, 80, 15, 0.4);
    color: #facc35;
    font-size: 22px;
}

.tab.active svg {
    width: 44px;
    height: 44px;
}

.tab.active::before {
    content: "";
    position: absolute;
    top: -8px;
    left: 22%;
    right: 22%;
    height: 4px;
    background-color: #dc961d;
}
```
